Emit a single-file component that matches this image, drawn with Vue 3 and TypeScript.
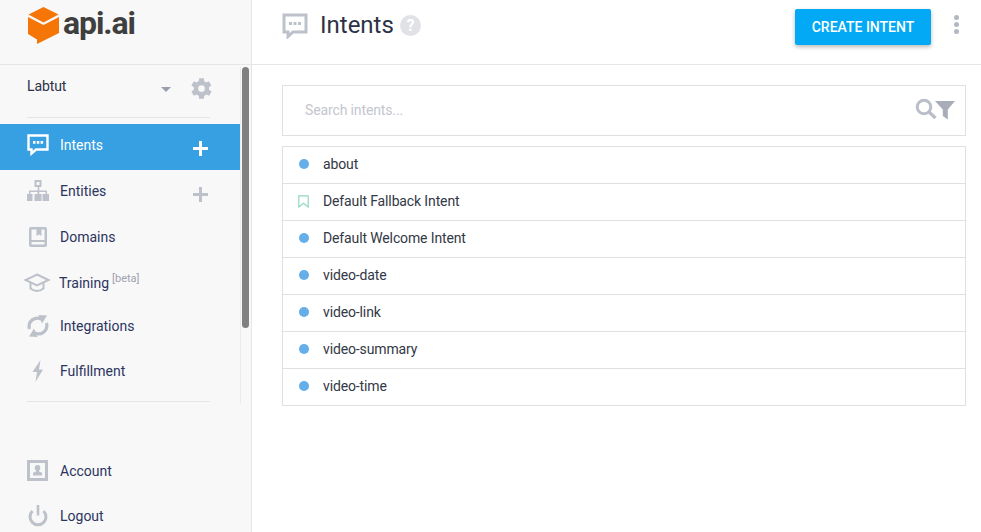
<script setup lang="ts">
const intents: { name: string; fallback?: boolean }[] = [
  { name: 'about' },
  { name: 'Default Fallback Intent', fallback: true },
  { name: 'Default Welcome Intent' },
  { name: 'video-date' },
  { name: 'video-link' },
  { name: 'video-summary' },
  { name: 'video-time' },
]
</script>

<template>
  <div class="page">
    <aside class="sidebar">
      <div class="logo">
        <svg class="cube" width="31" height="38" viewBox="0 0 31 38">
          <path d="M15.500 1 L30.500 8.500 L15.500 16.500 L.500 8.500 Z" fill="#f57507" />
          <path d="M0 11 L15.500 19 L31 11 V27 L15 35 L9 38 V33.500 L0 28 Z" fill="#f57507" />
        </svg>
        <span class="logo-text">api.ai</span>
      </div>

      <div class="nav-scroll">
        <div class="project">
          <span class="project-name">Labtut</span>
          <span class="caret"></span>
          <svg class="gear" width="23" height="23" viewBox="0 0 24 24">
            <path fill="#bcc1ca" fill-rule="evenodd" d="M19.800 13.300a8 8 0 0 0 0-2.600l2.500-1.900-2.500-4.300-2.900 1.200a8 8 0 0 0-2.200-1.300L14.500 1.400h-5l-.4 3a8 8 0 0 0-2.200 1.300L4 4.500 1.500 8.800 4 10.700a8 8 0 0 0 0 2.600l-2.500 1.900L4 19.500l2.900-1.200a8 8 0 0 0 2.200 1.300l.4 3h5l.4-3a8 8 0 0 0 2.200-1.300l2.900 1.200 2.500-4.300zM12 15.500a3.500 3.500 0 1 1 0-7 3.500 3.500 0 0 1 0 7z" />
          </svg>
        </div>
        <div class="divider first"></div>

        <nav class="nav">
          <div class="item active">
            <svg class="icon" width="22" height="22" viewBox="0 0 22 22">
              <path fill="none" stroke="#fff" stroke-width="2.400" d="M1.500 1.500 H20.500 V15.500 H9 L4.500 19.500 V15.500 H1.500 Z" />
              <path fill="#fff" d="M6 7h2.500v2.800H6zM9.800 7h2.500v2.800H9.800zM13.600 7h2.500v2.800h-2.500z" />
            </svg>
            <span class="label">Intents</span>
            <span class="plus"></span>
          </div>
          <div class="item">
            <svg class="icon" width="22" height="22" viewBox="0 0 22 22">
              <path fill="#bcc1ca" fill-rule="evenodd" d="M7.500 0h7v7H12.300v3.500H20V14h2v7h-6.500v-7h3v-2h-6.200v2h2.200v7H7.500v-7h3v-2H3.500v2h2v7H0v-7h2V10.500h8.700V7H7.500zM9.500 2v3h3V2z" />
            </svg>
            <span class="label">Entities</span>
            <span class="plus"></span>
          </div>
          <div class="item">
            <svg class="icon" width="22" height="22" viewBox="0 0 22 22">
              <path fill="#bcc1ca" fill-rule="evenodd" d="M4 1h14a2 2 0 0 1 2 2v16a2 2 0 0 1-2 2H4a2 2 0 0 1-2-2V3a2 2 0 0 1 2-2zM4.500 3.500v10.500h13V3.500h-3v6.500l-2.500-1.500L9.500 10V3.500zM4.500 16v2.500h13V16z" />
            </svg>
            <span class="label">Domains</span>
          </div>
          <div class="item training">
            <svg class="icon wide" width="28" height="22" viewBox="0 0 28 22">
              <path fill="none" stroke="#bcc1ca" stroke-width="2" d="M14 2.500 L25.500 8 L14 13.500 L2.500 8 Z" />
              <path fill="none" stroke="#bcc1ca" stroke-width="2" d="M7.500 11 V16.500 Q14 21.500 20.500 16.500 V11" />
            </svg>
            <span class="label">Training</span>
            <sup class="beta">[beta]</sup>
          </div>
          <div class="item short">
            <svg class="icon" width="22" height="22" viewBox="0 0 22 22">
              <path fill="none" stroke="#bcc1ca" stroke-width="3.200" d="M2.500 14 C0.500 6 8 1 14.500 4 M19.500 8 C21.500 16 14 21 7.500 18" />
              <path fill="#bcc1ca" d="M11.500 0 L20 .500 L15 8.500 Z M10.500 22 L2 21.500 L7 13.500 Z" />
            </svg>
            <span class="label">Integrations</span>
          </div>
          <div class="item">
            <svg class="icon" width="22" height="22" viewBox="0 0 22 22">
              <path fill="#bcc1ca" d="M13.500 0 L5.500 12 H10 L8.500 22 L16 9.500 H12 Z" />
            </svg>
            <span class="label">Fulfillment</span>
          </div>
        </nav>
        <div class="divider second"></div>
      </div>

      <div class="bottom">
        <div class="item">
          <svg class="icon" width="22" height="22" viewBox="0 0 22 22">
            <path fill="#bcc1ca" fill-rule="evenodd" d="M0 0h21v21H0zM3 3v15h15V3z" />
            <path fill="#bcc1ca" d="M10.500 5a2.800 2.800 0 0 1 2.800 3c0 1-.5 2-1.200 2.500v1l3 1.200v2.800H6v-2.800l3-1.200v-1c-.7-.5-1.200-1.500-1.200-2.500a2.800 2.800 0 0 1 2.700-3z" />
          </svg>
          <span class="label">Account</span>
        </div>
        <div class="item">
          <svg class="icon" width="22" height="22" viewBox="0 0 22 22">
            <path fill="none" stroke="#bcc1ca" stroke-width="3" d="M5.500 6 A8 8 0 1 0 16.500 6" />
            <path fill="none" stroke="#bcc1ca" stroke-width="2.600" d="M11 0 V10.500" />
          </svg>
          <span class="label">Logout</span>
        </div>
      </div>

      <div class="track"></div>
      <div class="thumb"></div>
    </aside>

    <main class="main">
      <header class="header">
        <svg class="head-icon" width="26" height="26" viewBox="0 0 26 26">
          <path fill="none" stroke="#bcc1ca" stroke-width="3" d="M2 2 H24 V19 H11 L6 23.500 V19 H2 Z" />
          <path fill="#bcc1ca" d="M7 9h3v3H7zM11.500 9h3v3h-3zM16 9h3v3h-3z" />
        </svg>
        <h1 class="title">Intents</h1>
        <span class="help">?</span>
        <button class="create">CREATE INTENT</button>
        <span class="dots"><i></i><i></i><i></i></span>
      </header>

      <section class="content">
        <div class="search">
          <span class="placeholder">Search intents...</span>
          <svg width="22" height="22" viewBox="0 0 22 22" class="mag">
            <circle cx="9" cy="9" r="6.800" fill="none" stroke="#b9bec8" stroke-width="3" />
            <path d="M14 14 L20.500 20" stroke="#b9bec8" stroke-width="3.400" />
          </svg>
          <svg width="20" height="20" viewBox="0 0 20 20" class="funnel">
            <path fill="#a8adb8" d="M0 1 H20 L12.800 9.500 V19.500 L7.800 16 V9.500 Z" />
          </svg>
        </div>

        <ul class="list">
          <li v-for="intent in intents" :key="intent.name" class="row">
            <span class="mark">
              <svg v-if="intent.fallback" width="11" height="13" viewBox="0 0 11 13">
                <path fill="none" stroke="#93d8c0" stroke-width="1.200" d="M.800.800 H10.200 V12 L5.500 8.200 L.800 12 Z" />
              </svg>
              <span v-else class="dot"></span>
            </span>
            <span class="name">{{ intent.name }}</span>
          </li>
        </ul>
      </section>
    </main>
  </div>
</template>

<style>
html, body { margin: 0; background: #fff; overflow: hidden; }
</style>

<style scoped>
.page {
  display: flex;
  width: 981px;
  height: 532px;
  overflow: hidden;
  font-family: Roboto, "Liberation Sans", sans-serif;
  color: #2c3245;
  background: #fff;
}
.sidebar {
  position: relative;
  flex: 0 0 251px;
  height: 532px;
  background: #f8f8f8;
  border-right: 1px solid #e6e6e6;
}
.logo {
  display: flex;
  align-items: flex-start;
  box-sizing: border-box;
  height: 65px;
  padding: 6px 0 0 28px;
  border-bottom: 1px solid #e6e6e6;
}
.cube { flex: none; }
.logo-text {
  margin: -3px 0 0 4px;
  font-size: 32px;
  line-height: 40px;
  font-weight: 700;
  letter-spacing: -1.100px;
  color: #3f3f3f;
}
.project {
  display: flex;
  align-items: center;
  height: 44px;
  padding: 0 39px 0 27px;
}
.project-name { flex: 1; margin-top: -2px; font-size: 14px; letter-spacing: -.1px; }
.caret {
  width: 0;
  height: 0;
  margin: 4px 19px 0 0;
  border-left: 5px solid transparent;
  border-right: 5px solid transparent;
  border-top: 5px solid #9a9fae;
}
.gear { margin: 2px -1px 0 0; }
.divider {
  width: 183px;
  height: 1px;
  margin-left: 27px;
  background: #e6e6e6;
}
.first { margin-top: 8px; margin-bottom: 6px; }
.second { margin-top: 5px; }
.nav { width: 240px; }
.item {
  display: flex;
  align-items: center;
  box-sizing: border-box;
  height: 46px;
  padding: 0 0 4px 27px;
  font-size: 14px;
  color: #2c3460;
}
.item.short { height: 44px; margin-top: -2px; }
.icon { flex: none; margin-right: 11px; }
.icon.wide { margin: 0 8px 0 -4px; }
.label { flex: none; }
.active {
  background: #36a0e2;
  color: #fff;
}
.beta {
  align-self: flex-start;
  margin: 11px 0 0 3px;
  font-size: 11px;
  line-height: 12px;
  color: #9da2ae;
}
.plus {
  position: relative;
  width: 15px;
  height: 15px;
  margin-left: auto;
  margin-right: 32px;
  margin-top: 7px;
  background:
    linear-gradient(currentColor, currentColor) center / 15px 3px no-repeat,
    linear-gradient(currentColor, currentColor) center / 3px 15px no-repeat;
  color: #bcc1ca;
}
.active .plus { color: #fff; }
.bottom { margin-top: 48px; }
.bottom .item { height: 45px; }
.track {
  position: absolute;
  left: 240px;
  top: 67px;
  width: 1px;
  height: 337px;
  background: #ebebeb;
}
.thumb {
  position: absolute;
  left: 242px;
  top: 67px;
  width: 7px;
  height: 261px;
  border-radius: 4px;
  background: #808080;
}
.main { flex: 1; min-width: 0; }
.header {
  display: flex;
  align-items: center;
  box-sizing: border-box;
  height: 65px;
  padding: 0 22px 13px 30px;
  border-bottom: 1px solid #e6e6e6;
}
.head-icon { flex: none; margin-right: 12px; }
.title {
  margin: -2px 0 0;
  font-size: 24px;
  font-weight: 400;
  line-height: 28px;
}
.help {
  width: 21px;
  height: 21px;
  margin-left: 6px;
  border-radius: 50%;
  background: #e0e2e6;
  color: #fff;
  font-size: 16px;
  font-weight: 700;
  line-height: 21px;
  text-align: center;
}
.create {
  width: 136px;
  height: 36px;
  margin: 2px 23px 0 auto;
  padding: 0;
  border: 0;
  border-radius: 2px;
  background: #03a9f4;
  color: #fff;
  font: 500 14px Roboto, "Liberation Sans", sans-serif;
  box-shadow: 0 2px 4px rgba(0, 0, 0, .28);
}
.dots { display: flex; flex-direction: column; gap: 2px; margin-top: -2px; }
.dots i {
  width: 5px;
  height: 5px;
  border-radius: 50%;
  background: #b3b7c2;
}
.content { padding: 20px 15px 0 30px; }
.search {
  display: flex;
  align-items: center;
  box-sizing: border-box;
  height: 51px;
  padding: 0 10px 0 22px;
  border: 1px solid #e0e0e0;
}
.placeholder { flex: 1; margin-top: -2px; font-size: 14px; letter-spacing: -.13px; color: #c3c6cd; }
.mag { margin-top: -3px; }
.funnel { margin: -1px 0 0 -2px; }
.list {
  margin: 10px 0 0;
  padding: 0;
  list-style: none;
  border: 1px solid #e0e0e0;
}
.row {
  display: flex;
  align-items: center;
  box-sizing: border-box;
  height: 37px;
  padding-bottom: 2px;
  border-bottom: 1px solid #e0e0e0;
  font-size: 14px;
  letter-spacing: -.13px;
}
.row:last-child { height: 36px; border-bottom: 0; }
.mark {
  display: flex;
  justify-content: center;
  width: 11px;
  margin: 0 13px 0 15px;
}
.dot {
  width: 10px;
  height: 10px;
  border-radius: 50%;
  background: #64aeea;
}
.name { margin-left: 1px; color: #333845; }
</style>
